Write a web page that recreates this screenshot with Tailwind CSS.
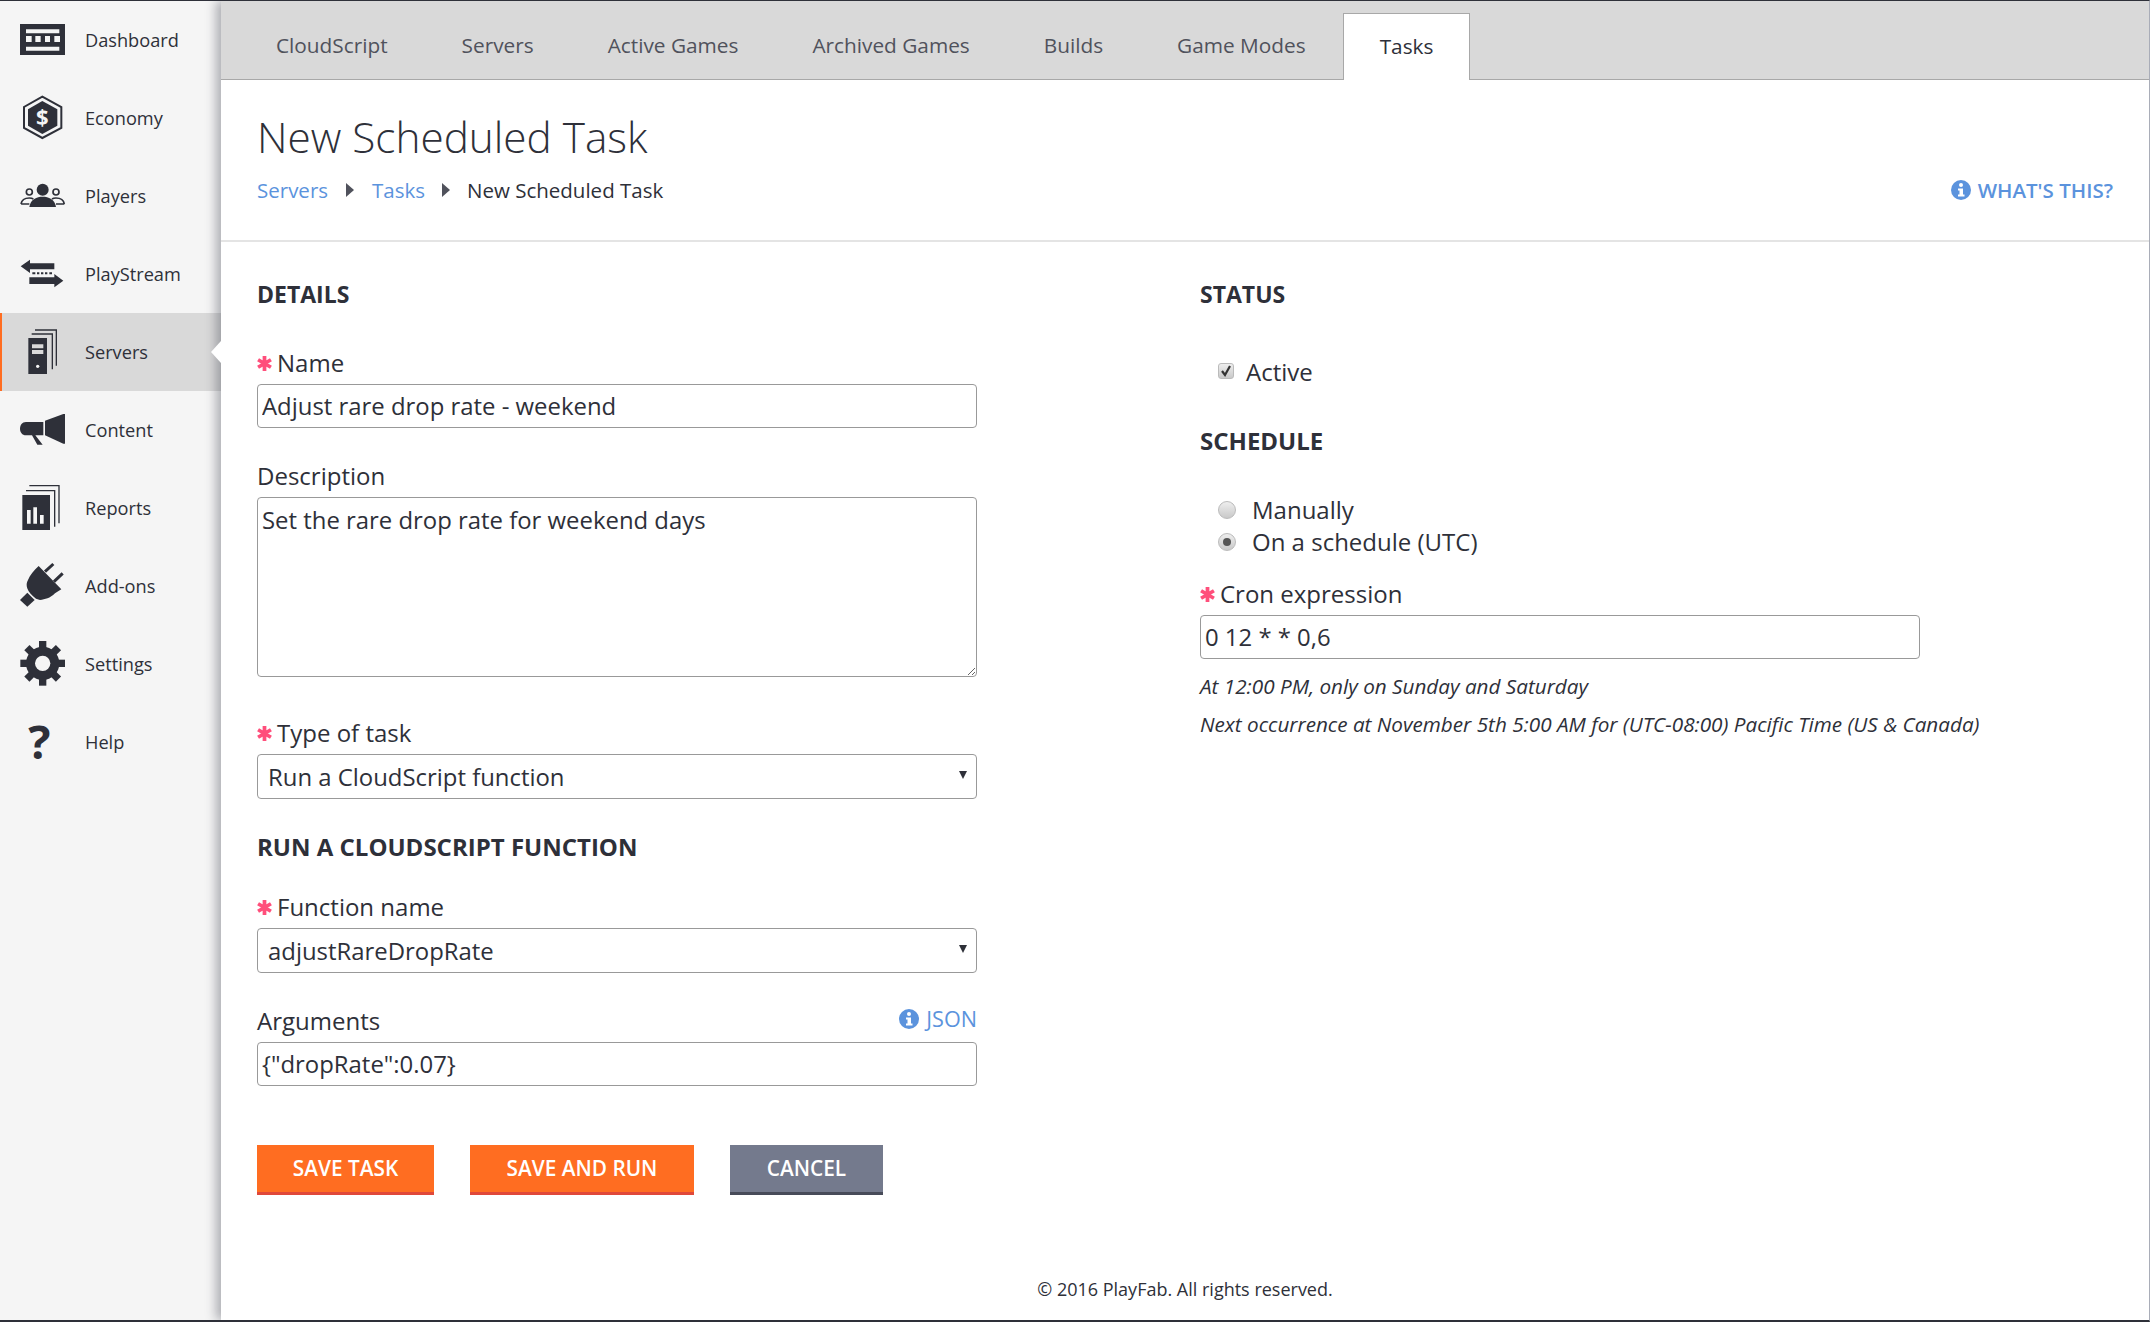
<!DOCTYPE html>
<html lang="en">
<head>
  <meta charset="UTF-8" />
  <title>New Scheduled Task</title>
  <script src="https://cdn.jsdelivr.net/npm/@tailwindcss/browser@4"></script>
</head>
<body class="bg-white text-[#2e3039] font-['Open_Sans',sans-serif]">
  <div class="flex h-screen overflow-hidden border-t border-t-[#2e3039] border-b-2 border-b-[#2e3039] border-r border-r-[#a9adb8]">

    <!-- sidebar -->
    <nav class="w-[221px] shrink-0 bg-[#f5f5f5]">
      <a class="flex items-center h-[78px] pl-[18px]">
        <svg class="w-12 h-12 shrink-0" viewBox="54 48 144 144" fill="#2e3039">
          <path fill-rule="evenodd" d="M60 72H195V165H60ZM78 88V100H178V88ZM78 108V126H95V108ZM106 108V126H122V108ZM135 108V126H150V108ZM163 108V126H180V108ZM78 140V152H178V140Z"/>
        </svg>
        <span class="ml-[19px] mt-[1px] text-[18.200px] font-medium">Dashboard</span>
      </a>
      <a class="flex items-center h-[78px] pl-[18px]">
        <svg class="w-12 h-12 shrink-0" viewBox="54 282 144 144" fill="#2e3039">
          <polygon points="127,290 184,321 184,384 127,414 72,384 72,321" fill="none" stroke="#2e3039" stroke-width="6"/>
          <polygon points="127,303 172,328 172,377 127,402 84,377 84,328"/>
          <text x="127" y="375" text-anchor="middle" font-size="66" font-weight="700" fill="#f5f5f5" font-family="Open Sans">$</text>
        </svg>
        <span class="ml-[19px] mt-[1px] text-[18.200px] font-medium">Economy</span>
      </a>
      <a class="flex items-center h-[78px] pl-[18px]">
        <svg class="w-12 h-12 shrink-0" viewBox="54 516 144 144" fill="#2e3039">
          <circle cx="128" cy="569" r="18"/>
          <path d="M88 621C92 597 110 590 128 590C146 590 164 597 168 621Z"/>
          <g fill="none" stroke="#2e3039" stroke-width="5">
            <circle cx="88" cy="576" r="9"/>
            <circle cx="168" cy="576" r="9"/>
            <path d="M63 612C65 600 76 594 88 594C93 594 97 595 100 597M88 612H63"/>
            <path d="M193 612C191 600 180 594 168 594C163 594 159 595 156 597M168 612H193"/>
          </g>
        </svg>
        <span class="ml-[19px] mt-[1px] text-[18.200px] font-medium">Players</span>
      </a>
      <a class="flex items-center h-[78px] pl-[18px]">
        <svg class="w-12 h-12 shrink-0" viewBox="54 750 144 144" fill="#2e3039">
          <path d="M62 799L90 779V790H163V808H90V819Z"/>
          <path d="M190 842L163 822V832H88V852H163V862Z"/>
          <path d="M97 817H106V823H97ZM111 817H118V823H111ZM123 817H130V823H123ZM135 817H142V823H135ZM148 817H156V823H148Z"/>
        </svg>
        <span class="ml-[19px] mt-[1px] text-[18.200px] font-medium">PlayStream</span>
      </a>
      <a class="flex items-center h-[78px] pl-[18px] bg-[#d9d9d9] border-l-2 border-l-[#ff6d21]">
        <svg class="w-12 h-12 shrink-0 -ml-[2px]" viewBox="54 984 144 144" fill="#2e3039">
          <path d="M105 990H169V1097" fill="none" stroke="#2e3039" stroke-width="4"/>
          <path d="M95 1002H157V1108" fill="none" stroke="#2e3039" stroke-width="4"/>
          <path fill-rule="evenodd" d="M85 1014H141V1122H85ZM96 1033V1045H130V1033ZM96 1050V1062H130V1050Z"/>
          <circle cx="113" cy="1099" r="5" fill="#f5f5f5"/>
        </svg>
        <span class="ml-[19px] mt-[1px] text-[18.200px] font-medium">Servers</span>
      </a>
      <a class="flex items-center h-[78px] pl-[18px]">
        <svg class="w-12 h-12 shrink-0" viewBox="54 18 144 144" fill="#2e3039">
          <path d="M78 66H130V106H106L128 134H112L96 106H78C66 106 60 96 60 86C60 76 66 66 78 66Z"/>
          <path d="M135 62L190 42H195V131H190L135 106Z"/>
        </svg>
        <span class="ml-[19px] mt-[1px] text-[18.200px] font-medium">Content</span>
      </a>
      <a class="flex items-center h-[78px] pl-[18px]">
        <svg class="w-12 h-12 shrink-0" viewBox="54 252 144 144" fill="#2e3039">
          <path d="M88 257H177V370" fill="none" stroke="#2e3039" stroke-width="4"/>
          <path d="M78 272H164V380" fill="none" stroke="#2e3039" stroke-width="4"/>
          <path fill-rule="evenodd" d="M67 285H150V390H67ZM81 330V371H92V330ZM100 322V371H111V322ZM120 345V371H131V345Z"/>
        </svg>
        <span class="ml-[19px] mt-[1px] text-[18.200px] font-medium">Reports</span>
      </a>
      <a class="flex items-center h-[78px] pl-[18px]">
        <svg class="w-12 h-12 shrink-0" viewBox="54 486 144 144" fill="#2e3039">
          <path d="M135 515L160 492M162 545L188 520" stroke="#2e3039" stroke-width="9" fill="none"/>
          <path d="M116 498L184 568L165 580C150 595 135 598 120 600L108 596C80 575 75 555 84 540C90 525 102 510 116 498Z"/>
          <path d="M60 600L82 578L104 600L82 620Z"/>
        </svg>
        <span class="ml-[19px] mt-[1px] text-[18.200px] font-medium">Add-ons</span>
      </a>
      <a class="flex items-center h-[78px] pl-[18px]">
        <svg class="w-12 h-12 shrink-0" viewBox="54 720 144 144" fill="#2e3039">
          <circle cx="128" cy="790" r="50"/>
          <g>
            <rect x="117" y="723" width="22" height="24"/>
            <rect x="117" y="723" width="22" height="24" transform="rotate(45 128 790)"/>
            <rect x="117" y="723" width="22" height="24" transform="rotate(90 128 790)"/>
            <rect x="117" y="723" width="22" height="24" transform="rotate(135 128 790)"/>
            <rect x="117" y="723" width="22" height="24" transform="rotate(180 128 790)"/>
            <rect x="117" y="723" width="22" height="24" transform="rotate(225 128 790)"/>
            <rect x="117" y="723" width="22" height="24" transform="rotate(270 128 790)"/>
            <rect x="117" y="723" width="22" height="24" transform="rotate(315 128 790)"/>
          </g>
          <circle cx="128" cy="790" r="23" fill="#f5f5f5"/>
        </svg>
        <span class="ml-[19px] mt-[1px] text-[18.200px] font-medium">Settings</span>
      </a>
      <a class="flex items-center h-[78px] pl-[18px]">
        <svg class="w-12 h-12 shrink-0 overflow-visible" viewBox="54 954 144 144" fill="#2e3039">
          <text x="118" y="1078" text-anchor="middle" font-size="140" font-weight="700" font-family="Open Sans">?</text>
        </svg>
        <span class="ml-[19px] mt-[1px] text-[18.200px] font-medium">Help</span>
      </a>
    </nav>

    <!-- main -->
    <main class="relative flex-1 flex flex-col bg-white shadow-[-5px_0_10px_rgba(40,44,56,0.35)]">
      <!-- active row notch -->
      <div class="absolute left-[-10px] top-[340px] w-0 h-0 border-y-[11px] border-y-transparent border-r-[10px] border-r-white"></div>

      <div class="flex h-[79px] shrink-0 pl-[18px] pt-[12px] bg-[#d9d9d9] border-b border-b-[#a8a8a8] text-[20.800px] text-[#50525c]">
        <a class="px-[37px] h-[67px] leading-[64px]">CloudScript</a>
        <a class="px-[37px] h-[67px] leading-[64px]">Servers</a>
        <a class="px-[37px] h-[67px] leading-[64px]">Active Games</a>
        <a class="px-[37px] h-[67px] leading-[64px]">Archived Games</a>
        <a class="px-[37px] h-[67px] leading-[64px]">Builds</a>
        <a class="px-[37px] h-[67px] leading-[64px]">Game Modes</a>
        <a class="px-[36px] h-[67px] leading-[64px] bg-white border border-[#a8a8a8] border-b-0 text-[#2e3039]">Tasks</a>
      </div>

      <div class="h-[162px] shrink-0 pl-[36px] pr-[36px] border-b-2 border-b-[#e4e4e4]">
        <h1 class="pt-[30px] text-[42.300px] leading-[54px] font-light">New Scheduled Task</h1>
        <div class="flex items-center mt-[11px] h-[30px] text-[20.500px]">
          <a class="text-[#5b93dd]">Servers</a>
          <svg class="w-[8px] h-[14px] ml-[18px] mr-[18px]" viewBox="0 0 8 14" fill="#50525c"><path d="M0 0L8 7L0 14Z"/></svg>
          <a class="text-[#5b93dd]">Tasks</a>
          <svg class="w-[8px] h-[14px] ml-[17px] mr-[17px]" viewBox="0 0 8 14" fill="#50525c"><path d="M0 0L8 7L0 14Z"/></svg>
          <span>New Scheduled Task</span>
          <a class="ml-auto flex items-center text-[#5b93dd] font-semibold">
            <svg class="w-5 h-5 mr-[7px]" viewBox="0 0 20 20"><circle cx="10" cy="10" r="10" fill="#5b93dd"/><circle cx="10" cy="5" r="2" fill="#fff"/><path d="M7 8.500H12V14.500H13.500V16.500H7V14.500H8.500V10.500H7Z" fill="#fff"/></svg>
            WHAT'S THIS?
          </a>
        </div>
      </div>

      <div class="flex-1 flex pl-[36px] pt-[37px]">
        <!-- left column -->
        <div class="w-[720px] shrink-0 text-[24px]">
          <h2 class="h-[30px] leading-[30px] text-[23px] font-bold">DETAILS</h2>

          <label class="flex items-center mt-[39px] h-[30px] leading-[30px] font-medium">
            <svg class="w-[15px] h-[15px] mr-[5px] shrink-0" viewBox="0 0 14 14" stroke="#ff4f7b" stroke-width="3.500"><path d="M7 0V14M1 3.500L13 10.500M13 3.500L1 10.500"/></svg>Name</label>
          <input class="block mt-[6px] w-full h-[44px] px-[4px] pb-[1px] border border-[#999] rounded text-[23.900px]" value="Adjust rare drop rate - weekend" />

          <label class="block mt-[33px] h-[30px] leading-[30px]">Description</label>
          <textarea class="block mt-[6px] w-full h-[180px] px-[4px] py-[4px] border border-[#999] rounded resize-y text-[23.900px]">Set the rare drop rate for weekend days</textarea>

          <label class="flex items-center mt-[41px] h-[30px] leading-[30px] font-medium">
            <svg class="w-[15px] h-[15px] mr-[5px] shrink-0" viewBox="0 0 14 14" stroke="#ff4f7b" stroke-width="3.500"><path d="M7 0V14M1 3.500L13 10.500M13 3.500L1 10.500"/></svg>Type of task</label>
          <div class="relative mt-[6px]">
            <select class="block appearance-none w-full h-[45px] pl-[10px] border border-[#999] rounded bg-white text-[23.900px]">
              <option>Run a CloudScript function</option>
            </select>
            <span class="absolute right-[10px] top-[17px] w-0 h-0 border-x-[4px] border-x-transparent border-t-[8px] border-t-[#2e3039]"></span>
          </div>

          <h2 class="mt-[33px] h-[30px] leading-[30px] font-bold">RUN A CLOUDSCRIPT FUNCTION</h2>

          <label class="flex items-center mt-[30px] h-[30px] leading-[30px] font-medium">
            <svg class="w-[15px] h-[15px] mr-[5px] shrink-0" viewBox="0 0 14 14" stroke="#ff4f7b" stroke-width="3.500"><path d="M7 0V14M1 3.500L13 10.500M13 3.500L1 10.500"/></svg>Function name</label>
          <div class="relative mt-[6px]">
            <select class="block appearance-none w-full h-[45px] pl-[10px] border border-[#999] rounded bg-white text-[23.900px]">
              <option>adjustRareDropRate</option>
            </select>
            <span class="absolute right-[10px] top-[17px] w-0 h-0 border-x-[4px] border-x-transparent border-t-[8px] border-t-[#2e3039]"></span>
          </div>

          <div class="flex justify-between items-center mt-[33px] h-[30px]">
            <label class="leading-[30px]">Arguments</label>
            <a class="flex items-center text-[21.600px] text-[#5b93dd] -mt-[3px]">
              <svg class="w-5 h-5 mr-[7px]" viewBox="0 0 20 20"><circle cx="10" cy="10" r="10" fill="#5b93dd"/><circle cx="10" cy="5" r="2" fill="#fff"/><path d="M7 8.500H12V14.500H13.500V16.500H7V14.500H8.500V10.500H7Z" fill="#fff"/></svg>
              JSON
            </a>
          </div>
          <input class="block mt-[6px] w-full h-[44px] px-[4px] pb-[1px] border border-[#999] rounded text-[23.900px]" value='{"dropRate":0.07}' />

          <div class="flex mt-[59px] text-[20.800px] font-semibold text-white">
            <button class="w-[177px] h-[50px] bg-[#ff6d21] border-b-[3px] border-b-[#e0483a]">SAVE TASK</button>
            <button class="ml-[36px] w-[224px] h-[50px] bg-[#ff6d21] border-b-[3px] border-b-[#e0483a]">SAVE AND RUN</button>
            <button class="ml-[36px] w-[153px] h-[50px] bg-[#747a8d] border-b-[3px] border-b-[#474b59]">CANCEL</button>
          </div>
        </div>

        <!-- right column -->
        <div class="ml-[223px] w-[720px] shrink-0 text-[24px]">
          <h2 class="h-[30px] leading-[30px] text-[23px] font-bold">STATUS</h2>
          <div class="flex items-center mt-[48px] h-[30px] pl-[18px]">
            <span class="flex items-center justify-center w-4 h-4 -mt-[3px] rounded-[3px] border border-[#bbb] bg-linear-to-b from-[#eee] to-[#c9c9c9]">
              <svg class="w-3 h-3" viewBox="0 0 12 12"><path d="M2 6L5 10L10 1" fill="none" stroke="#333" stroke-width="2.200"/></svg>
            </span>
            <span class="ml-[12px]">Active</span>
          </div>

          <h2 class="mt-[39px] h-[30px] leading-[30px] font-bold">SCHEDULE</h2>
          <div class="flex items-center mt-[39px] h-[30px] pl-[18px]">
            <span class="w-[18px] h-[18px] rounded-full border border-[#bbb] bg-linear-to-b from-[#eee] to-[#c9c9c9]"></span>
            <span class="ml-[16px]">Manually</span>
          </div>
          <div class="flex items-center mt-[2px] h-[30px] pl-[18px]">
            <span class="flex items-center justify-center w-[18px] h-[18px] rounded-full border border-[#bbb] bg-linear-to-b from-[#eee] to-[#c9c9c9]">
              <span class="w-2 h-2 rounded-full bg-[#555]"></span>
            </span>
            <span class="ml-[16px]">On a schedule (UTC)</span>
          </div>

          <label class="flex items-center mt-[22px] h-[30px] leading-[30px] font-medium">
            <svg class="w-[15px] h-[15px] mr-[5px] shrink-0" viewBox="0 0 14 14" stroke="#ff4f7b" stroke-width="3.500"><path d="M7 0V14M1 3.500L13 10.500M13 3.500L1 10.500"/></svg>Cron expression</label>
          <input class="block mt-[6px] w-full h-[44px] px-[4px] pb-[1px] border border-[#999] rounded text-[23.900px]" value="0 12 * * 0,6" />

          <p class="mt-[12px] h-[30px] leading-[30px] text-[20.700px] italic">At 12:00 PM, only on Sunday and Saturday</p>
          <p class="mt-[8px] h-[30px] leading-[30px] text-[20.700px] italic whitespace-nowrap">Next occurrence at November 5th 5:00 AM for (UTC-08:00) Pacific Time (US &amp; Canada)</p>
        </div>
      </div>

      <footer class="shrink-0 h-[44px] leading-[26px] text-center text-[18px]">© 2016 PlayFab. All rights reserved.</footer>
    </main>
  </div>
</body>
</html>
